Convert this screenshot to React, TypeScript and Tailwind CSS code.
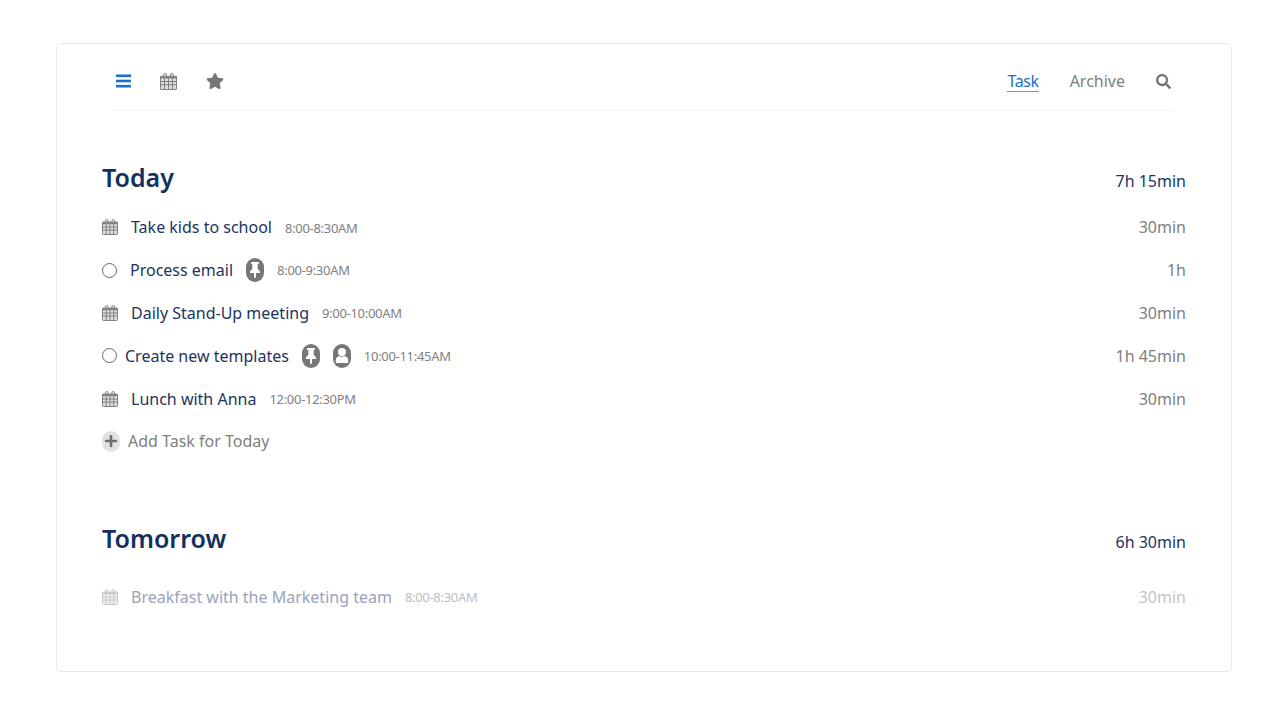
import React from 'react';
import { FaStar, FaSearch, FaPlus } from 'react-icons/fa';

const CalendarIcon = ({ className }: { className?: string }) => (
  <svg viewBox="0 0 16 16" className={className} fill="none" stroke="currentColor">
    <path d="M3.500 3.500V1.800a1.300 1.300 0 0 1 2.600 0v1.700M9.900 3.500V1.800a1.300 1.300 0 0 1 2.600 0v1.700" strokeWidth="1" />
    <rect x="0.500" y="3" width="15" height="12.500" rx="0.800" fill="currentColor" fillOpacity="0.25" strokeWidth="1" />
    <path d="M0.500 4.200h15" strokeWidth="2" />
    <path d="M4.250 5v10M8 5v10M11.750 5v10M1 8h14M1 11h14" strokeWidth="1" />
  </svg>
);

const Badge = ({ children }: { children: React.ReactNode }) => (
  <span className="flex h-[24px] w-[18px] items-center justify-center rounded-[9px] bg-[#777777] text-white">
    {children}
  </span>
);

const PinBadge = () => (
  <Badge>
    <svg viewBox="0 0 14 18" className="h-[18px] w-[14px]" fill="currentColor">
      <path d="M3 1h8v1.500l-1.300.700v4.800l2.300 2.300V12H8v4l-1 1.500L6 16v-4H2v-1.700L4.300 8V3.200L3 2.500z" />
    </svg>
  </Badge>
);

const UserBadge = () => (
  <Badge>
    <svg viewBox="0 0 14 18" className="h-[19px] w-[14px]" fill="currentColor">
      <circle cx="7" cy="5.500" r="4" />
      <path d="M0.800 16.500v-3C0.800 11 3 9.800 4.500 9.500c1.500 1 3.500 1 5 0 1.500.300 3.700 1.500 3.700 4v3z" />
    </svg>
  </Badge>
);

type Task = {
  kind: 'event' | 'todo';
  title: string;
  time: string;
  duration: string;
  gap: string;
  badges?: React.ReactNode;
};

const today: Task[] = [
  { kind: 'event', title: 'Take kids to school', time: '8:00-8:30AM', duration: '30min', gap: 'ml-[13px]' },
  { kind: 'todo', title: 'Process email', time: '8:00-9:30AM', duration: '1h', gap: 'ml-[13px]', badges: <PinBadge /> },
  { kind: 'event', title: 'Daily Stand-Up meeting', time: '9:00-10:00AM', duration: '30min', gap: 'ml-[13px]' },
  { kind: 'todo', title: 'Create new templates', time: '10:00-11:45AM', duration: '1h 45min', gap: 'ml-[8px]', badges: <><PinBadge /><UserBadge /></> },
  { kind: 'event', title: 'Lunch with Anna', time: '12:00-12:30PM', duration: '30min', gap: 'ml-[13px]' },
];

const TaskRow = ({ task }: { task: Task }) => (
  <div className="flex h-[42.800px] items-center justify-between">
    <div className="flex items-center">
      {task.kind === 'event' ? (
        <CalendarIcon className="h-[16px] w-[16px] text-[#808080]" />
      ) : (
        <span className="h-[15px] w-[15px] rounded-full border border-[#666666]" />
      )}
      <span className={`${task.gap} text-[16px] text-[#1d3461]`}>{task.title}</span>
      {task.badges && <span className="ml-[13px] flex items-center gap-[13px]">{task.badges}</span>}
      <span className="mt-[2px] ml-[13px] text-[13px] tracking-[-0.3px] text-[#808080]">{task.time}</span>
    </div>
    <span className="text-[16px] text-[#808080]">{task.duration}</span>
  </div>
);

const SectionHeader = ({ title, total }: { title: string; total: string }) => (
  <div className="flex items-center justify-between">
    <h2 className="text-[25px] leading-[36px] font-semibold text-[#14305f]">{title}</h2>
    <span className="mt-[8px] text-[16px] text-[#1d3461]">{total}</span>
  </div>
);

export default function App() {
  return (
    <div className="min-h-[720px] bg-white pt-[43px] pl-[56px] font-['Noto_Sans',sans-serif]">
      <div className="h-[629px] w-[1176px] rounded-[5px] border border-[#e8e8e8] px-[45px]">
        <nav className="mr-[12px] ml-[10px] flex h-[67px] items-center justify-between border-b border-[#f3f3f3] pt-[8px] pr-[3px] pl-[4px]">
          <div className="flex items-center gap-[29px]">
            <svg viewBox="0 0 16 14" className="h-[14px] w-[15px] text-[#1b6fd0]" fill="currentColor" preserveAspectRatio="none">
              <rect y="0.500" width="16" height="2.600" />
              <rect y="5.700" width="16" height="2.600" />
              <rect y="10.900" width="16" height="2.600" />
            </svg>
            <CalendarIcon className="h-[17px] w-[17px] text-[#808080]" />
            <FaStar className="h-[16px] w-[18px] text-[#777777]" />
          </div>
          <div className="flex items-center">
            <a className="border-b border-[#5b9be0] pt-[1px] text-[16px] leading-[20px] tracking-[-0.4px] text-[#1b6fd0]">Task</a>
            <a className="ml-[31px] text-[16px] text-[#808080]">Archive</a>
            <FaSearch className="ml-[31px] h-[15px] w-[15px] text-[#777777]" />
          </div>
        </nav>
        <section className="mt-[48px]">
          <SectionHeader title="Today" total="7h 15min" />
          <div className="mt-[11px]">
            {today.map((task) => (
              <TaskRow key={task.title} task={task} />
            ))}
            <div className="flex h-[42.800px] items-center">
              <span className="flex h-[21px] w-[18px] items-center justify-center rounded-[9px] bg-[#e2e2e2]">
                <FaPlus className="h-[14px] w-[14px] text-[#6f6f6f]" />
              </span>
              <span className="ml-[8px] text-[16px] text-[#808080]">Add Task for Today</span>
            </div>
          </div>
        </section>
        <section className="mt-[57px]">
          <SectionHeader title="Tomorrow" total="6h 30min" />
          <div className="mt-[20px] flex h-[42.800px] items-center justify-between">
            <div className="flex items-center">
              <CalendarIcon className="h-[16px] w-[16px] text-[#c8c8c8]" />
              <span className="ml-[13px] text-[16px] text-[#9aa3bb]">Breakfast with the Marketing team</span>
              <span className="mt-[2px] ml-[13px] text-[13px] tracking-[-0.3px] text-[#bdbdbd]">8:00-8:30AM</span>
            </div>
            <span className="text-[16px] text-[#c4c4c4]">30min</span>
          </div>
        </section>
      </div>
    </div>
  );
}
